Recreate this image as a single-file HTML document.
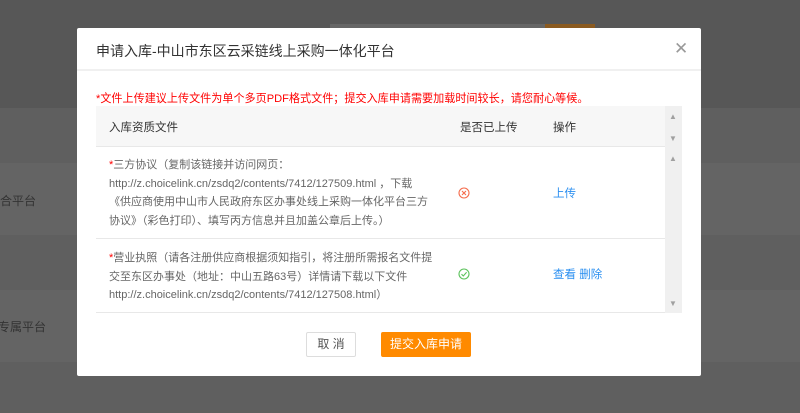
<!DOCTYPE html>
<html><head><meta charset="utf-8"><style>
*{margin:0;padding:0;box-sizing:border-box}
body{width:800px;height:413px;overflow:hidden;background:#5f5f5f;font-family:"Liberation Sans","Noto Sans CJK SC",sans-serif;position:relative}
.bg1{position:absolute;left:0;top:0;width:800px;height:108px;background:#575757}
.band{position:absolute;left:0;width:800px;background:#646464}
.bgt{position:absolute;left:0;font-size:12px;color:#333}
.modal{position:absolute;left:77px;top:28px;width:624px;height:348px;background:#fff;border-radius:2px}
.title{position:absolute;left:19px;top:13px;font-size:14px;color:#333}
.x{position:absolute;left:597px;top:11px;font-size:17px;color:#999;font-family:"DejaVu Sans",sans-serif;font-weight:200}
.hr{position:absolute;left:0;top:41px;width:624px;height:2px;background:#f0f0f0}
.note{position:absolute;left:19px;top:62px;font-size:11.1px;color:#f00;white-space:nowrap}
.tbl{position:absolute;left:19px;top:78px;width:586px;height:207px}
.th{position:absolute;left:0;top:0;width:569px;height:41px;background:#f7f7f7;border-bottom:1px solid #e8e8e8;font-size:11.5px;color:#333}
.sb{position:absolute;left:569px;top:0;width:17px;height:207px;background:#f0f0f0}
.sb span{position:absolute;left:4px;font-size:8px;color:#a0a0a0}
.row{position:absolute;left:0;width:569px;border-bottom:1px solid #e8e8e8;font-size:11px;color:#666;line-height:18.5px}
.row .t{position:absolute;left:13px;width:345px;white-space:nowrap}
.lnk{color:#2b8ff0;position:absolute;left:457px;font-size:11.5px}
.btn{position:absolute;top:304px;height:25px;font-size:12px;line-height:25px;text-align:center;border-radius:2px}
</style></head><body>
<div class="bg1"></div>
<div style="position:absolute;left:330px;top:24px;width:215px;height:4px;background:#666"></div>
<div style="position:absolute;left:545px;top:24px;width:50px;height:4px;background:#8a5a20"></div>
<div class="band" style="top:163px;height:72px"></div>
<div class="band" style="top:290px;height:72px"></div>
<div class="bgt" style="top:192px">合平台</div>
<div class="bgt" style="top:318px;left:-2px">专属平台</div>
<div class="modal">
<div class="title">申请入库-中山市东区云采链线上采购一体化平台</div>
<div class="x">✕</div>
<div class="hr"></div>
<div class="note">*文件上传建议上传文件为单个多页PDF格式文件；提交入库申请需要加载时间较长，请您耐心等候。</div>
<div class="tbl">
<div class="th"><span style="position:absolute;left:13px;top:13px">入库资质文件</span><span style="position:absolute;left:364px;top:13px">是否已上传</span><span style="position:absolute;left:457px;top:13px">操作</span></div>
<div class="row" style="top:42px;height:91px"><div class="t" style="top:8px"><span style="color:#f00">*</span>三方协议（复制该链接并访问网页：<br>http://z.choicelink.cn/zsdq2/contents/7412/127509.html ，下载<br>《供应商使用中山市人民政府东区办事处线上采购一体化平台三方<br>协议》（彩色打印）、填写丙方信息并且加盖公章后上传。）</div>
<svg style="position:absolute;left:362px;top:39px" width="12" height="12" viewBox="0 0 12 12"><circle cx="6" cy="6" r="5" fill="none" stroke="#f56c4c" stroke-width="1.1"/><path d="M4 4L8 8M8 4L4 8" stroke="#f56c4c" stroke-width="1.1"/></svg>
<span class="lnk" style="top:37px">上传</span></div>
<div class="row" style="top:134px;height:73px"><div class="t" style="top:9px"><span style="color:#f00">*</span>营业执照（请各注册供应商根据须知指引，将注册所需报名文件提<br>交至东区办事处（地址：中山五路63号）详情请下载以下文件<br>http://z.choicelink.cn/zsdq2/contents/7412/127508.html）</div>
<svg style="position:absolute;left:362px;top:28px" width="12" height="12" viewBox="0 0 12 12"><circle cx="6" cy="6" r="5" fill="none" stroke="#5cc25c" stroke-width="1.1"/><path d="M3.5 6.2L5.3 8L8.6 4.3" fill="none" stroke="#5cc25c" stroke-width="1.1"/></svg>
<span class="lnk" style="top:26px">查看 删除</span></div>
<div class="sb"><span style="top:6px">▲</span><span style="top:28px">▼</span><span style="top:48px">▲</span><span style="top:193px">▼</span></div>
</div>
<div class="btn" style="left:229px;width:50px;border:1px solid #ddd;color:#555;line-height:23px">取 消</div>
<div class="btn" style="left:304px;width:90px;background:#ff8a00;color:#fff">提交入库申请</div>
</div>
</body></html>
